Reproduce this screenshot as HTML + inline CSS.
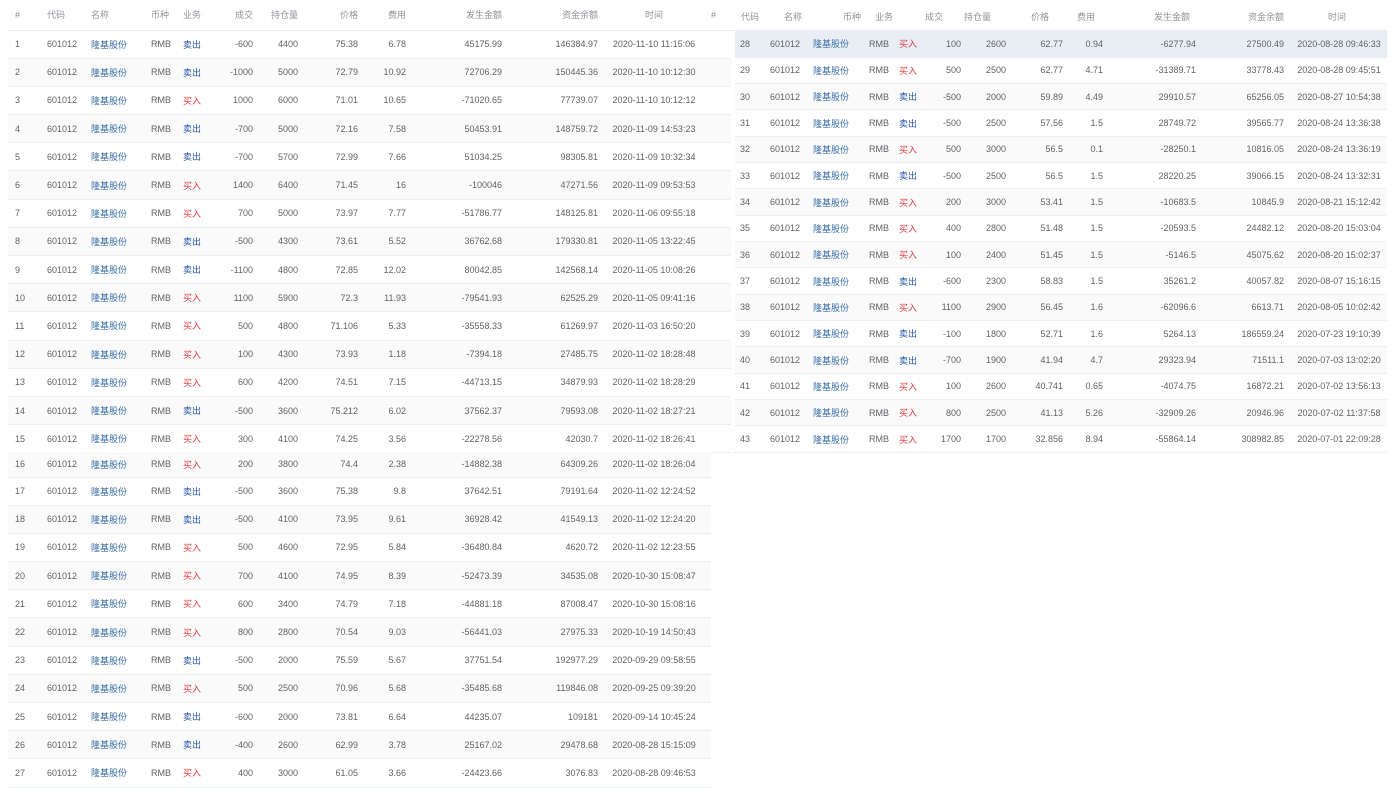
<!DOCTYPE html>
<html><head><meta charset="utf-8"><style>
*{margin:0;padding:0;box-sizing:border-box}
body{width:1393px;height:788px;background:#fff;font-family:"Liberation Sans","Noto Sans CJK SC",sans-serif;font-size:9px;color:#606266;position:relative;overflow:hidden}
table{border-collapse:collapse;table-layout:fixed;position:absolute}
td,th{font-weight:normal;white-space:nowrap;overflow:hidden;border-bottom:1px solid #ebeef5;padding:0}
th{color:#909399}
.L{left:8px}
#lt{top:0;width:723px}
#lb{top:452px;width:703px}
#lt th{height:30px}
#lt td{height:28.2px}
#lb tr:first-child td{height:25px}
#lb td{height:28.2px}
tr.g td{background:#fafafa}
tr.h td{background:#e9eef5}
.c0{padding-left:7px}.cl{padding-left:7px}.cr{text-align:right;padding-right:7px}.cc{text-align:center}
.n{color:#3a6ea5}.b{color:#2456a6}.r{color:#e0383a}
#rt{left:735px;top:31px;width:652px}
#rt td{height:26.33px}
#rh{position:absolute;left:700px;top:0;width:687px;height:31px;border-bottom:1px solid #ebeef5}
#rh span{position:absolute;top:10px;color:#909399}
</style></head><body>
<table id="lt" class="L">
<colgroup><col style="width:32px"><col style="width:44px"><col style="width:60px"><col style="width:32px"><col style="width:39px"><col style="width:45px"><col style="width:45px"><col style="width:60px"><col style="width:48px"><col style="width:96px"><col style="width:96px"><col style="width:98px"><col style="width:28px"></colgroup>
<tr><th class="cl" style="text-align:left">#</th><th class="cl" style="text-align:left">代码</th><th class="cl" style="text-align:left">名称</th><th class="cl" style="text-align:left">币种</th><th class="cl" style="text-align:left">业务</th><th class="cr">成交</th><th class="cr">持仓量</th><th class="cr">价格</th><th class="cr">费用</th><th class="cr">发生金额</th><th class="cr">资金余额</th><th class="cc">时间</th><th></th></tr>
<tr><td class="cl">1</td><td class="cl">601012</td><td class="cl n">隆基股份</td><td class="cl">RMB</td><td class="cl b">卖出</td><td class="cr">-600</td><td class="cr">4400</td><td class="cr">75.38</td><td class="cr">6.78</td><td class="cr">45175.99</td><td class="cr">146384.97</td><td class="cc">2020-11-10 11:15:06</td><td></td></tr>
<tr class="g"><td class="cl">2</td><td class="cl">601012</td><td class="cl n">隆基股份</td><td class="cl">RMB</td><td class="cl b">卖出</td><td class="cr">-1000</td><td class="cr">5000</td><td class="cr">72.79</td><td class="cr">10.92</td><td class="cr">72706.29</td><td class="cr">150445.36</td><td class="cc">2020-11-10 10:12:30</td><td></td></tr>
<tr><td class="cl">3</td><td class="cl">601012</td><td class="cl n">隆基股份</td><td class="cl">RMB</td><td class="cl r">买入</td><td class="cr">1000</td><td class="cr">6000</td><td class="cr">71.01</td><td class="cr">10.65</td><td class="cr">-71020.65</td><td class="cr">77739.07</td><td class="cc">2020-11-10 10:12:12</td><td></td></tr>
<tr class="g"><td class="cl">4</td><td class="cl">601012</td><td class="cl n">隆基股份</td><td class="cl">RMB</td><td class="cl b">卖出</td><td class="cr">-700</td><td class="cr">5000</td><td class="cr">72.16</td><td class="cr">7.58</td><td class="cr">50453.91</td><td class="cr">148759.72</td><td class="cc">2020-11-09 14:53:23</td><td></td></tr>
<tr><td class="cl">5</td><td class="cl">601012</td><td class="cl n">隆基股份</td><td class="cl">RMB</td><td class="cl b">卖出</td><td class="cr">-700</td><td class="cr">5700</td><td class="cr">72.99</td><td class="cr">7.66</td><td class="cr">51034.25</td><td class="cr">98305.81</td><td class="cc">2020-11-09 10:32:34</td><td></td></tr>
<tr class="g"><td class="cl">6</td><td class="cl">601012</td><td class="cl n">隆基股份</td><td class="cl">RMB</td><td class="cl r">买入</td><td class="cr">1400</td><td class="cr">6400</td><td class="cr">71.45</td><td class="cr">16</td><td class="cr">-100046</td><td class="cr">47271.56</td><td class="cc">2020-11-09 09:53:53</td><td></td></tr>
<tr><td class="cl">7</td><td class="cl">601012</td><td class="cl n">隆基股份</td><td class="cl">RMB</td><td class="cl r">买入</td><td class="cr">700</td><td class="cr">5000</td><td class="cr">73.97</td><td class="cr">7.77</td><td class="cr">-51786.77</td><td class="cr">148125.81</td><td class="cc">2020-11-06 09:55:18</td><td></td></tr>
<tr class="g"><td class="cl">8</td><td class="cl">601012</td><td class="cl n">隆基股份</td><td class="cl">RMB</td><td class="cl b">卖出</td><td class="cr">-500</td><td class="cr">4300</td><td class="cr">73.61</td><td class="cr">5.52</td><td class="cr">36762.68</td><td class="cr">179330.81</td><td class="cc">2020-11-05 13:22:45</td><td></td></tr>
<tr><td class="cl">9</td><td class="cl">601012</td><td class="cl n">隆基股份</td><td class="cl">RMB</td><td class="cl b">卖出</td><td class="cr">-1100</td><td class="cr">4800</td><td class="cr">72.85</td><td class="cr">12.02</td><td class="cr">80042.85</td><td class="cr">142568.14</td><td class="cc">2020-11-05 10:08:26</td><td></td></tr>
<tr class="g"><td class="cl">10</td><td class="cl">601012</td><td class="cl n">隆基股份</td><td class="cl">RMB</td><td class="cl r">买入</td><td class="cr">1100</td><td class="cr">5900</td><td class="cr">72.3</td><td class="cr">11.93</td><td class="cr">-79541.93</td><td class="cr">62525.29</td><td class="cc">2020-11-05 09:41:16</td><td></td></tr>
<tr><td class="cl">11</td><td class="cl">601012</td><td class="cl n">隆基股份</td><td class="cl">RMB</td><td class="cl r">买入</td><td class="cr">500</td><td class="cr">4800</td><td class="cr">71.106</td><td class="cr">5.33</td><td class="cr">-35558.33</td><td class="cr">61269.97</td><td class="cc">2020-11-03 16:50:20</td><td></td></tr>
<tr class="g"><td class="cl">12</td><td class="cl">601012</td><td class="cl n">隆基股份</td><td class="cl">RMB</td><td class="cl r">买入</td><td class="cr">100</td><td class="cr">4300</td><td class="cr">73.93</td><td class="cr">1.18</td><td class="cr">-7394.18</td><td class="cr">27485.75</td><td class="cc">2020-11-02 18:28:48</td><td></td></tr>
<tr><td class="cl">13</td><td class="cl">601012</td><td class="cl n">隆基股份</td><td class="cl">RMB</td><td class="cl r">买入</td><td class="cr">600</td><td class="cr">4200</td><td class="cr">74.51</td><td class="cr">7.15</td><td class="cr">-44713.15</td><td class="cr">34879.93</td><td class="cc">2020-11-02 18:28:29</td><td></td></tr>
<tr class="g"><td class="cl">14</td><td class="cl">601012</td><td class="cl n">隆基股份</td><td class="cl">RMB</td><td class="cl b">卖出</td><td class="cr">-500</td><td class="cr">3600</td><td class="cr">75.212</td><td class="cr">6.02</td><td class="cr">37562.37</td><td class="cr">79593.08</td><td class="cc">2020-11-02 18:27:21</td><td></td></tr>
<tr><td class="cl">15</td><td class="cl">601012</td><td class="cl n">隆基股份</td><td class="cl">RMB</td><td class="cl r">买入</td><td class="cr">300</td><td class="cr">4100</td><td class="cr">74.25</td><td class="cr">3.56</td><td class="cr">-22278.56</td><td class="cr">42030.7</td><td class="cc">2020-11-02 18:26:41</td><td></td></tr>
</table>
<table id="lb" class="L">
<colgroup><col style="width:32px"><col style="width:44px"><col style="width:60px"><col style="width:32px"><col style="width:39px"><col style="width:45px"><col style="width:45px"><col style="width:60px"><col style="width:48px"><col style="width:96px"><col style="width:96px"><col style="width:98px"><col style="width:8px"></colgroup>
<tr class="g"><td class="cl">16</td><td class="cl">601012</td><td class="cl n">隆基股份</td><td class="cl">RMB</td><td class="cl r">买入</td><td class="cr">200</td><td class="cr">3800</td><td class="cr">74.4</td><td class="cr">2.38</td><td class="cr">-14882.38</td><td class="cr">64309.26</td><td class="cc">2020-11-02 18:26:04</td><td></td></tr>
<tr><td class="cl">17</td><td class="cl">601012</td><td class="cl n">隆基股份</td><td class="cl">RMB</td><td class="cl b">卖出</td><td class="cr">-500</td><td class="cr">3600</td><td class="cr">75.38</td><td class="cr">9.8</td><td class="cr">37642.51</td><td class="cr">79191.64</td><td class="cc">2020-11-02 12:24:52</td><td></td></tr>
<tr class="g"><td class="cl">18</td><td class="cl">601012</td><td class="cl n">隆基股份</td><td class="cl">RMB</td><td class="cl b">卖出</td><td class="cr">-500</td><td class="cr">4100</td><td class="cr">73.95</td><td class="cr">9.61</td><td class="cr">36928.42</td><td class="cr">41549.13</td><td class="cc">2020-11-02 12:24:20</td><td></td></tr>
<tr><td class="cl">19</td><td class="cl">601012</td><td class="cl n">隆基股份</td><td class="cl">RMB</td><td class="cl r">买入</td><td class="cr">500</td><td class="cr">4600</td><td class="cr">72.95</td><td class="cr">5.84</td><td class="cr">-36480.84</td><td class="cr">4620.72</td><td class="cc">2020-11-02 12:23:55</td><td></td></tr>
<tr class="g"><td class="cl">20</td><td class="cl">601012</td><td class="cl n">隆基股份</td><td class="cl">RMB</td><td class="cl r">买入</td><td class="cr">700</td><td class="cr">4100</td><td class="cr">74.95</td><td class="cr">8.39</td><td class="cr">-52473.39</td><td class="cr">34535.08</td><td class="cc">2020-10-30 15:08:47</td><td></td></tr>
<tr><td class="cl">21</td><td class="cl">601012</td><td class="cl n">隆基股份</td><td class="cl">RMB</td><td class="cl r">买入</td><td class="cr">600</td><td class="cr">3400</td><td class="cr">74.79</td><td class="cr">7.18</td><td class="cr">-44881.18</td><td class="cr">87008.47</td><td class="cc">2020-10-30 15:08:16</td><td></td></tr>
<tr class="g"><td class="cl">22</td><td class="cl">601012</td><td class="cl n">隆基股份</td><td class="cl">RMB</td><td class="cl r">买入</td><td class="cr">800</td><td class="cr">2800</td><td class="cr">70.54</td><td class="cr">9.03</td><td class="cr">-56441.03</td><td class="cr">27975.33</td><td class="cc">2020-10-19 14:50:43</td><td></td></tr>
<tr><td class="cl">23</td><td class="cl">601012</td><td class="cl n">隆基股份</td><td class="cl">RMB</td><td class="cl b">卖出</td><td class="cr">-500</td><td class="cr">2000</td><td class="cr">75.59</td><td class="cr">5.67</td><td class="cr">37751.54</td><td class="cr">192977.29</td><td class="cc">2020-09-29 09:58:55</td><td></td></tr>
<tr class="g"><td class="cl">24</td><td class="cl">601012</td><td class="cl n">隆基股份</td><td class="cl">RMB</td><td class="cl r">买入</td><td class="cr">500</td><td class="cr">2500</td><td class="cr">70.96</td><td class="cr">5.68</td><td class="cr">-35485.68</td><td class="cr">119846.08</td><td class="cc">2020-09-25 09:39:20</td><td></td></tr>
<tr><td class="cl">25</td><td class="cl">601012</td><td class="cl n">隆基股份</td><td class="cl">RMB</td><td class="cl b">卖出</td><td class="cr">-600</td><td class="cr">2000</td><td class="cr">73.81</td><td class="cr">6.64</td><td class="cr">44235.07</td><td class="cr">109181</td><td class="cc">2020-09-14 10:45:24</td><td></td></tr>
<tr class="g"><td class="cl">26</td><td class="cl">601012</td><td class="cl n">隆基股份</td><td class="cl">RMB</td><td class="cl b">卖出</td><td class="cr">-400</td><td class="cr">2600</td><td class="cr">62.99</td><td class="cr">3.78</td><td class="cr">25167.02</td><td class="cr">29478.68</td><td class="cc">2020-08-28 15:15:09</td><td></td></tr>
<tr><td class="cl">27</td><td class="cl">601012</td><td class="cl n">隆基股份</td><td class="cl">RMB</td><td class="cl r">买入</td><td class="cr">400</td><td class="cr">3000</td><td class="cr">61.05</td><td class="cr">3.66</td><td class="cr">-24423.66</td><td class="cr">3076.83</td><td class="cc">2020-08-28 09:46:53</td><td></td></tr>
</table>
<div id="rh">
<span style="left:11px">#</span><span style="left:41px">代码</span><span style="left:84px">名称</span><span style="left:143px">币种</span><span style="left:175px">业务</span><span style="left:225px">成交</span><span style="left:264px">持仓量</span><span style="left:331px">价格</span><span style="left:377px">费用</span><span style="left:454px">发生金额</span><span style="left:548px">资金余额</span><span style="left:628px">时间</span>
</div>
<table id="rt">
<colgroup><col style="width:29px"><col style="width:42px"><col style="width:56px"><col style="width:30px"><col style="width:33px"><col style="width:43px"><col style="width:45px"><col style="width:57px"><col style="width:40px"><col style="width:93px"><col style="width:88px"><col style="width:96px"></colgroup>
<tr class="h"><td style="padding-left:5px">28</td><td class="cl" style="padding-left:6px">601012</td><td class="cl n">隆基股份</td><td class="cl">RMB</td><td class="cl r">买入</td><td class="cr">100</td><td class="cr">2600</td><td class="cr">62.77</td><td class="cr">0.94</td><td class="cr">-6277.94</td><td class="cr">27500.49</td><td class="cc">2020-08-28 09:46:33</td></tr>
<tr><td style="padding-left:5px">29</td><td class="cl" style="padding-left:6px">601012</td><td class="cl n">隆基股份</td><td class="cl">RMB</td><td class="cl r">买入</td><td class="cr">500</td><td class="cr">2500</td><td class="cr">62.77</td><td class="cr">4.71</td><td class="cr">-31389.71</td><td class="cr">33778.43</td><td class="cc">2020-08-28 09:45:51</td></tr>
<tr class="g"><td style="padding-left:5px">30</td><td class="cl" style="padding-left:6px">601012</td><td class="cl n">隆基股份</td><td class="cl">RMB</td><td class="cl b">卖出</td><td class="cr">-500</td><td class="cr">2000</td><td class="cr">59.89</td><td class="cr">4.49</td><td class="cr">29910.57</td><td class="cr">65256.05</td><td class="cc">2020-08-27 10:54:38</td></tr>
<tr><td style="padding-left:5px">31</td><td class="cl" style="padding-left:6px">601012</td><td class="cl n">隆基股份</td><td class="cl">RMB</td><td class="cl b">卖出</td><td class="cr">-500</td><td class="cr">2500</td><td class="cr">57.56</td><td class="cr">1.5</td><td class="cr">28749.72</td><td class="cr">39565.77</td><td class="cc">2020-08-24 13:36:38</td></tr>
<tr class="g"><td style="padding-left:5px">32</td><td class="cl" style="padding-left:6px">601012</td><td class="cl n">隆基股份</td><td class="cl">RMB</td><td class="cl r">买入</td><td class="cr">500</td><td class="cr">3000</td><td class="cr">56.5</td><td class="cr">0.1</td><td class="cr">-28250.1</td><td class="cr">10816.05</td><td class="cc">2020-08-24 13:36:19</td></tr>
<tr><td style="padding-left:5px">33</td><td class="cl" style="padding-left:6px">601012</td><td class="cl n">隆基股份</td><td class="cl">RMB</td><td class="cl b">卖出</td><td class="cr">-500</td><td class="cr">2500</td><td class="cr">56.5</td><td class="cr">1.5</td><td class="cr">28220.25</td><td class="cr">39066.15</td><td class="cc">2020-08-24 13:32:31</td></tr>
<tr class="g"><td style="padding-left:5px">34</td><td class="cl" style="padding-left:6px">601012</td><td class="cl n">隆基股份</td><td class="cl">RMB</td><td class="cl r">买入</td><td class="cr">200</td><td class="cr">3000</td><td class="cr">53.41</td><td class="cr">1.5</td><td class="cr">-10683.5</td><td class="cr">10845.9</td><td class="cc">2020-08-21 15:12:42</td></tr>
<tr><td style="padding-left:5px">35</td><td class="cl" style="padding-left:6px">601012</td><td class="cl n">隆基股份</td><td class="cl">RMB</td><td class="cl r">买入</td><td class="cr">400</td><td class="cr">2800</td><td class="cr">51.48</td><td class="cr">1.5</td><td class="cr">-20593.5</td><td class="cr">24482.12</td><td class="cc">2020-08-20 15:03:04</td></tr>
<tr class="g"><td style="padding-left:5px">36</td><td class="cl" style="padding-left:6px">601012</td><td class="cl n">隆基股份</td><td class="cl">RMB</td><td class="cl r">买入</td><td class="cr">100</td><td class="cr">2400</td><td class="cr">51.45</td><td class="cr">1.5</td><td class="cr">-5146.5</td><td class="cr">45075.62</td><td class="cc">2020-08-20 15:02:37</td></tr>
<tr><td style="padding-left:5px">37</td><td class="cl" style="padding-left:6px">601012</td><td class="cl n">隆基股份</td><td class="cl">RMB</td><td class="cl b">卖出</td><td class="cr">-600</td><td class="cr">2300</td><td class="cr">58.83</td><td class="cr">1.5</td><td class="cr">35261.2</td><td class="cr">40057.82</td><td class="cc">2020-08-07 15:16:15</td></tr>
<tr class="g"><td style="padding-left:5px">38</td><td class="cl" style="padding-left:6px">601012</td><td class="cl n">隆基股份</td><td class="cl">RMB</td><td class="cl r">买入</td><td class="cr">1100</td><td class="cr">2900</td><td class="cr">56.45</td><td class="cr">1.6</td><td class="cr">-62096.6</td><td class="cr">6613.71</td><td class="cc">2020-08-05 10:02:42</td></tr>
<tr><td style="padding-left:5px">39</td><td class="cl" style="padding-left:6px">601012</td><td class="cl n">隆基股份</td><td class="cl">RMB</td><td class="cl b">卖出</td><td class="cr">-100</td><td class="cr">1800</td><td class="cr">52.71</td><td class="cr">1.6</td><td class="cr">5264.13</td><td class="cr">186559.24</td><td class="cc">2020-07-23 19:10:39</td></tr>
<tr class="g"><td style="padding-left:5px">40</td><td class="cl" style="padding-left:6px">601012</td><td class="cl n">隆基股份</td><td class="cl">RMB</td><td class="cl b">卖出</td><td class="cr">-700</td><td class="cr">1900</td><td class="cr">41.94</td><td class="cr">4.7</td><td class="cr">29323.94</td><td class="cr">71511.1</td><td class="cc">2020-07-03 13:02:20</td></tr>
<tr><td style="padding-left:5px">41</td><td class="cl" style="padding-left:6px">601012</td><td class="cl n">隆基股份</td><td class="cl">RMB</td><td class="cl r">买入</td><td class="cr">100</td><td class="cr">2600</td><td class="cr">40.741</td><td class="cr">0.65</td><td class="cr">-4074.75</td><td class="cr">16872.21</td><td class="cc">2020-07-02 13:56:13</td></tr>
<tr class="g"><td style="padding-left:5px">42</td><td class="cl" style="padding-left:6px">601012</td><td class="cl n">隆基股份</td><td class="cl">RMB</td><td class="cl r">买入</td><td class="cr">800</td><td class="cr">2500</td><td class="cr">41.13</td><td class="cr">5.26</td><td class="cr">-32909.26</td><td class="cr">20946.96</td><td class="cc">2020-07-02 11:37:58</td></tr>
<tr><td style="padding-left:5px">43</td><td class="cl" style="padding-left:6px">601012</td><td class="cl n">隆基股份</td><td class="cl">RMB</td><td class="cl r">买入</td><td class="cr">1700</td><td class="cr">1700</td><td class="cr">32.856</td><td class="cr">8.94</td><td class="cr">-55864.14</td><td class="cr">308982.85</td><td class="cc">2020-07-01 22:09:28</td></tr>
</table>
</body></html>
